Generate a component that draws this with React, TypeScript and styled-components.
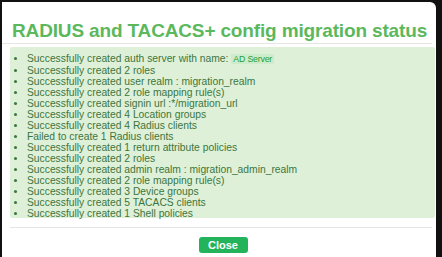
import styled, { createGlobalStyle } from 'styled-components';

const GlobalStyle = createGlobalStyle`
  html, body {
    margin: 0;
    padding: 0;
    background-color: #111;
    width: 442px;
    height: 257px;
    overflow: hidden;
  }
`;

const Modal = styled.div`
  margin: 2px 6px 0 2px;
  height: 255px;
  background-color: #fff;
  border-radius: 0 6px 0 0;
  font-family: "Liberation Sans", Arial, sans-serif;
  display: flex;
  flex-direction: column;
  overflow: hidden;
`;

const Header = styled.div`
  padding: 19px 0 2px 10px;
  border-bottom: 1px solid #e5e5e5;
  margin-right: 4px;

  & h2 {
    margin: 0;
    font-size: 19px;
    line-height: 20px;
    letter-spacing: -0.15px;
    font-weight: 700;
    color: #5cb85c;
    white-space: nowrap;
  }
`;

const Body = styled.div`
  padding: 3px 1px 0 8px;
`;

const Alert = styled.div`
  background-color: #dff0d8;
  color: #3c763d;
  border-radius: 2px;
  padding: 6px 0 5px 0;
  height: 160px;

  & ul {
    margin: 0;
    padding: 0 0 0 17px;
    font-size: 10.3px;
    line-height: 11px;
  }
`;

const Badge = styled.span`
  background-color: #cdeccc;
  color: #1e9e36;
  font-size: 8.8px;
  padding: 0 2px;
  letter-spacing: -0.2px;
`;

const Footer = styled.div`
  margin: 9px 4px 0 8px;
  border-top: 1px solid #e5e5e5;
  display: flex;
  justify-content: center;
  padding-top: 9px;
  padding-left: 4px;
`;

const CloseButton = styled.button`
  width: 49px;
  height: 16px;
  border: none;
  border-radius: 3px;
  background-color: #22b35b;
  color: #fff;
  font-family: "Liberation Sans", Arial, sans-serif;
  font-weight: 700;
  font-size: 11px;
  padding: 0;
  cursor: pointer;
`;

const items = [
  'Successfully created 2 roles',
  'Successfully created user realm : migration_realm',
  'Successfully created 2 role mapping rule(s)',
  'Successfully created signin url :*/migration_url',
  'Successfully created 4 Location groups',
  'Successfully created 4 Radius clients',
  'Failed to create 1 Radius clients',
  'Successfully created 1 return attribute policies',
  'Successfully created 2 roles',
  'Successfully created admin realm : migration_admin_realm',
  'Successfully created 2 role mapping rule(s)',
  'Successfully created 3 Device groups',
  'Successfully created 5 TACACS clients',
  'Successfully created 1 Shell policies',
];

export default function App() {
  return (
    <>
      <GlobalStyle />
      <Modal>
        <Header>
          <h2>RADIUS and TACACS+ config migration status</h2>
        </Header>
        <Body>
          <Alert>
            <ul>
              <li>
                Successfully created auth server with name: <Badge>AD Server</Badge>
              </li>
              {items.map((text, i) => (
                <li key={i}>{text}</li>
              ))}
            </ul>
          </Alert>
        </Body>
        <Footer>
          <CloseButton type="button">Close</CloseButton>
        </Footer>
      </Modal>
    </>
  );
}
